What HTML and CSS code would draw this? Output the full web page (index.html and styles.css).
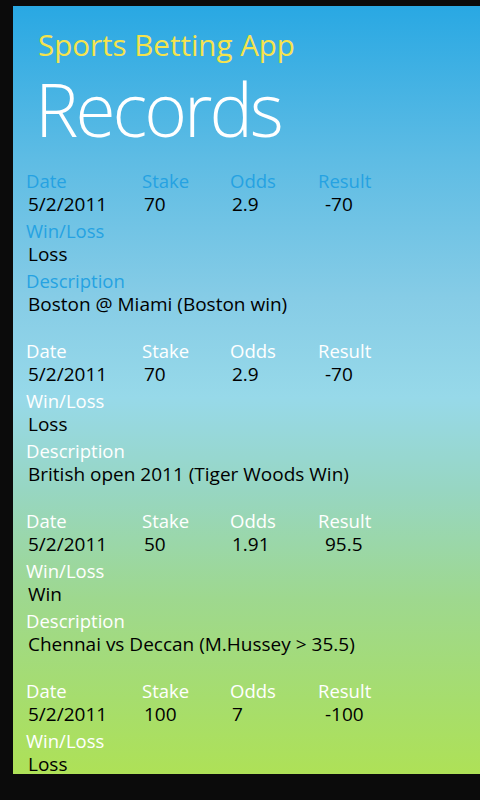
FILE: index.html
```html
<!DOCTYPE html>
<html>
<head>
<meta charset="utf-8">
<title>Records</title>
<link rel="stylesheet" href="styles.css">
</head>
<body>
<div class="screen">
<header>
<p class="app-title">Sports Betting App</p>
<h1>Records</h1>
</header>
<ul class="records">
<li class="record selected">
 <div class="row">
  <div><span class="label">Date</span><span class="value">5/2/2011</span></div>
  <div><span class="label">Stake</span><span class="value">70</span></div>
  <div><span class="label">Odds</span><span class="value">2.9</span></div>
  <div><span class="label">Result</span><span class="value result">-70</span></div>
 </div>
 <span class="label">Win/Loss</span><span class="value">Loss</span>
 <span class="label">Description</span><span class="value">Boston @ Miami (Boston win)</span>
</li>
<li class="record">
 <div class="row">
  <div><span class="label">Date</span><span class="value">5/2/2011</span></div>
  <div><span class="label">Stake</span><span class="value">70</span></div>
  <div><span class="label">Odds</span><span class="value">2.9</span></div>
  <div><span class="label">Result</span><span class="value result">-70</span></div>
 </div>
 <span class="label">Win/Loss</span><span class="value">Loss</span>
 <span class="label">Description</span><span class="value">British open 2011 (Tiger Woods Win)</span>
</li>
<li class="record">
 <div class="row">
  <div><span class="label">Date</span><span class="value">5/2/2011</span></div>
  <div><span class="label">Stake</span><span class="value">50</span></div>
  <div><span class="label">Odds</span><span class="value">1.91</span></div>
  <div><span class="label">Result</span><span class="value result">95.5</span></div>
 </div>
 <span class="label">Win/Loss</span><span class="value">Win</span>
 <span class="label">Description</span><span class="value">Chennai vs Deccan (M.Hussey &gt; 35.5)</span>
</li>
<li class="record">
 <div class="row">
  <div><span class="label">Date</span><span class="value">5/2/2011</span></div>
  <div><span class="label">Stake</span><span class="value">100</span></div>
  <div><span class="label">Odds</span><span class="value">7</span></div>
  <div><span class="label">Result</span><span class="value result">-100</span></div>
 </div>
 <span class="label">Win/Loss</span><span class="value">Loss</span>
</li>
</ul>
</div>
</body>
</html>
```
FILE: styles.css
```css
html, body {
 margin: 0;
 padding: 0;
 background: #0b0b0b;
 height: 100%;
}
body {
 font-family: 'Open Sans', 'Noto Sans', sans-serif;
 padding: 6px 0 0 13px;
 box-sizing: border-box;
 overflow: hidden;
}
.screen {
 height: 768px;
 overflow: hidden;
 background: linear-gradient(#29a8e3 0%, #5ebce4 20%, #86cce6 38%, #97d9e9 51%, #97d6c2 63%, #9ed88f 77%, #a6dd6e 90%, #aee157 100%);
}
header {
 padding: 24px 0 0 25px;
}
.app-title {
 color: #f5e34d;
 font-size: 29.5px;
 line-height: 1;
 margin: 0;
}
h1 {
 color: #fff;
 font-size: 73px;
 font-weight: 300;
 letter-spacing: -3px;
 line-height: 1;
 margin: 12px 0 0 -3px;
}
.records {
 list-style: none;
 margin: 25px 0 0 0;
 padding: 0 0 0 13px;
}
.record {
 padding: 0 0 20px 0;
}
.row {
 display: grid;
 grid-template-columns: 116px 88px 88px auto;
}
.label, .value {
 display: block;
 white-space: nowrap;
}
.label {
 color: #fff;
 font-size: 18.5px;
 line-height: 22px;
}
.selected .label {
 color: #25a2e2;
}
.value {
 color: #000;
 font-size: 19px;
 line-height: 24px;
 margin: 0 0 4px 2px;
}
.value.result {
 padding-left: 5px;
}
```
